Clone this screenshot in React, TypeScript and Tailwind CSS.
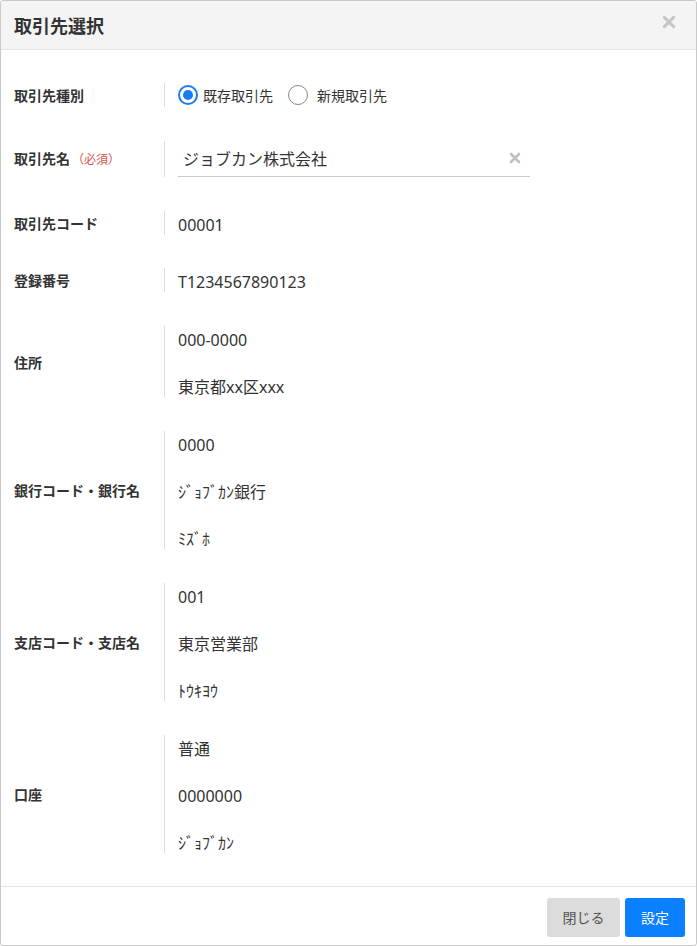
import React from "react";

const font = { fontFamily: '"Noto Sans CJK JP", "Noto Sans", sans-serif' };
const valFont = { fontFamily: '"Noto Sans", "Noto Sans CJK JP", sans-serif' };

function XIcon({ size, color, stroke }: { size: number; color: string; stroke: number }) {
  return (
    <svg width={size} height={size} viewBox="0 0 12 12">
      <path d="M2 2 L10 10 M10 2 L2 10" stroke={color} strokeWidth={stroke} strokeLinecap="round" />
    </svg>
  );
}

function Line({ children }: { children: React.ReactNode }) {
  return <div className="h-[24px] pt-[4px] leading-[20px] whitespace-nowrap">{children}</div>;
}

function Row({ label, children, required }: { label: string; children: React.ReactNode; required?: boolean }) {
  return (
    <div className="flex items-center">
      <div className="w-[150px] shrink-0 text-[14px] font-bold text-[#333] leading-[24px]">
        {label}
        {required && <span className="text-[12px] font-normal text-[#d9534f] ml-[2px]">（必須）</span>}
      </div>
      <div style={valFont} className="border-l border-[#dddddd] pl-[13px] flex flex-col gap-[23px] text-[16px] text-[#333]">
        {children}
      </div>
    </div>
  );
}

export default function App() {
  return (
    <div style={font} className="w-[697px] h-[946px] bg-white border border-[#c9c9c9] rounded-[3px] flex flex-col overflow-hidden">
      <div className="h-[49px] shrink-0 bg-[#f4f4f4] border-b border-[#e3e3e3] flex items-center justify-between pl-[13px] pr-[20px]">
        <div className="text-[18px] font-bold text-[#333]">取引先選択</div>
        <div className="-mt-[6px]"><XIcon size={14} color="#c6c6c6" stroke={2.6} /></div>
      </div>
      <div className="flex-1 pl-[13px] pt-[33px] flex flex-col gap-[33.8px]">
        <Row label="取引先種別">
          <div style={font} className="flex items-center h-[24px] text-[14px]">
            <span className="w-[20px] h-[20px] rounded-full border-[2px] border-[#1a7cf0] flex items-center justify-center">
              <span className="w-[10px] h-[10px] rounded-full bg-[#1a7cf0]" />
            </span>
            <span className="ml-[5px]">既存取引先</span>
            <span className="ml-[15px] w-[20px] h-[20px] rounded-full border border-[#888]" />
            <span className="ml-[9px]">新規取引先</span>
          </div>
        </Row>
        <Row label="取引先名" required>
          <div className="w-[352px] h-[36px] border-b border-[#cccccc] flex items-center justify-between pl-[5px] pr-[9px]">
            <span style={font}>ジョブカン株式会社</span>
            <XIcon size={12} color="#c0c0c0" stroke={2.6} />
          </div>
        </Row>
        <Row label="取引先コード">
          <Line>00001</Line>
        </Row>
        <Row label="登録番号">
          <Line>T1234567890123</Line>
        </Row>
        <Row label="住所">
          <Line>000-0000</Line>
          <Line>東京都xx区xxx</Line>
        </Row>
        <Row label="銀行コード・銀行名">
          <Line>0000</Line>
          <Line>ｼﾞｮﾌﾞｶﾝ銀行</Line>
          <Line>ﾐｽﾞﾎ</Line>
        </Row>
        <Row label="支店コード・支店名">
          <Line>001</Line>
          <Line>東京営業部</Line>
          <Line>ﾄｳｷﾖｳ</Line>
        </Row>
        <Row label="口座">
          <Line>普通</Line>
          <Line>0000000</Line>
          <Line>ｼﾞｮﾌﾞｶﾝ</Line>
        </Row>
      </div>
      <div className="shrink-0 border-t border-[#e3e3e3] pt-[11px] pb-[8px] pr-[11px] flex justify-end gap-[5px]">
        <button className="w-[73px] h-[39px] rounded-[3px] bg-[#dcdcdc] text-[14px] text-[#555]">閉じる</button>
        <button className="w-[60px] h-[39px] rounded-[3px] bg-[#0a80ff] text-[14px] text-white">設定</button>
      </div>
    </div>
  );
}
